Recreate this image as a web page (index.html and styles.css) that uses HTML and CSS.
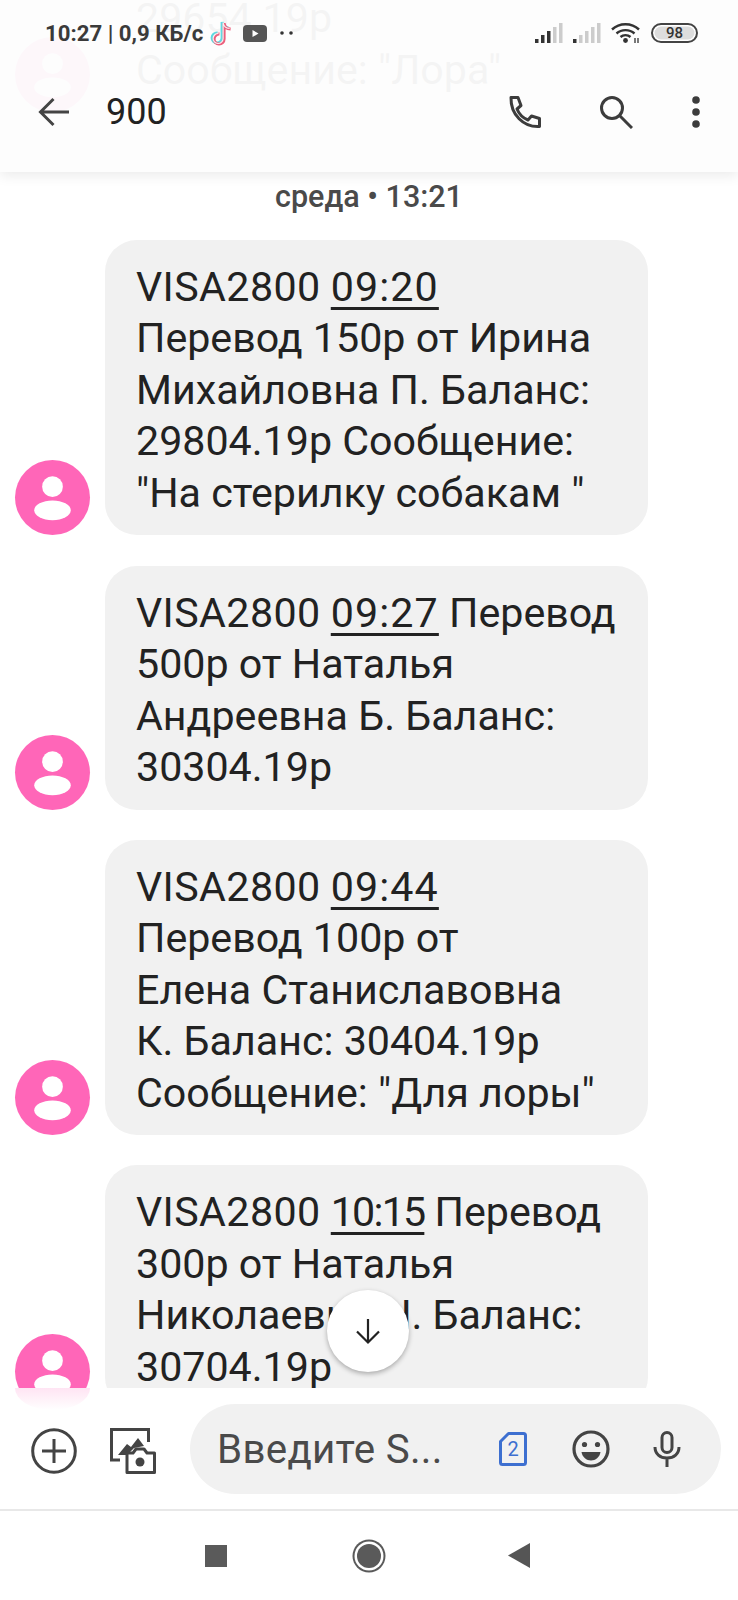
FILE: index.html
```html
<!DOCTYPE html>
<html lang="ru">
<head>
<meta charset="utf-8">
<title>900</title>
<link rel="stylesheet" href="styles.css">
</head>
<body>
<div class="phone">
  <main class="thread">
    <div class="list">
      <div class="msg ghost">
        <div class="avatar"><svg viewBox="0 0 76 76"><circle cx="38" cy="27" r="10.5"/><ellipse cx="38" cy="51" rx="18.5" ry="10"/></svg></div>
        <div class="bubble">29654.19р<br>Сообщение: "Лора"</div>
      </div>
      <div class="date">среда • 13:21</div>
      <div class="msg">
        <div class="avatar"><svg viewBox="0 0 76 76"><circle cx="38" cy="27" r="10.5"/><ellipse cx="38" cy="51" rx="18.5" ry="10"/></svg></div>
        <div class="bubble"><span class="card">VISA2800</span> <u class="wide">09:20</u><br>Перевод 150р от Ирина<br>Михайловна П. Баланс:<br>29804.19р Сообщение:<br>"На стерилку собакам "</div>
      </div>
      <div class="msg">
        <div class="avatar"><svg viewBox="0 0 76 76"><circle cx="38" cy="27" r="10.5"/><ellipse cx="38" cy="51" rx="18.5" ry="10"/></svg></div>
        <div class="bubble"><span class="card">VISA2800</span> <u class="wide">09:27</u> Перевод<br>500р от Наталья<br>Андреевна Б. Баланс:<br>30304.19р</div>
      </div>
      <div class="msg">
        <div class="avatar"><svg viewBox="0 0 76 76"><circle cx="38" cy="27" r="10.5"/><ellipse cx="38" cy="51" rx="18.5" ry="10"/></svg></div>
        <div class="bubble"><span class="card">VISA2800</span> <u class="wide">09:44</u><br>Перевод 100р от<br>Елена Станиславовна<br>К. Баланс: 30404.19р<br>Сообщение: "Для лоры"</div>
      </div>
      <div class="msg">
        <div class="avatar"><svg viewBox="0 0 76 76"><circle cx="38" cy="27" r="10.5"/><ellipse cx="38" cy="51" rx="18.5" ry="10"/></svg></div>
        <div class="bubble"><span class="card">VISA2800</span> <u class="narrow">10:15</u> Перевод<br>300р от Наталья<br>Николаевна Н. Баланс:<br>30704.19р</div>
      </div>
    </div>
    <div class="fade"></div>
    <button class="fab"><svg viewBox="0 0 30 30" width="30" height="30"><path d="M15 3v23.500M4 15.500l11 11 11-11" fill="none" stroke="#222" stroke-width="2.200"/></svg></button>
  </main>

  <header class="top">
    <div class="status">
      <div class="status-left">
        <span class="clock">10:27 | 0,9 КБ/с</span>
        <svg class="tiktok" viewBox="0 0 22 26" width="22" height="26">
          <g fill="none" stroke-width="3">
            <path d="M8.500 13.500a5 5 0 1 0 4.600 5V2.500c.5 3.500 3 5.800 6.500 6" stroke="#5fd9e0" transform="translate(-1 -.6)"/>
            <path d="M8.500 13.500a5 5 0 1 0 4.600 5V2.500c.5 3.500 3 5.800 6.500 6" stroke="#ec5f7c" transform="translate(1 .6)"/>
            <path d="M8.500 13.500a5 5 0 1 0 4.600 5V2.500c.5 3.500 3 5.800 6.500 6" stroke="#f4f4f4" stroke-width="1.200"/>
          </g>
        </svg>
        <svg class="yt" viewBox="0 0 24 17" width="24" height="17"><rect width="24" height="17" rx="4" fill="#555"/><path d="M9.500 5l6 3.500-6 3.500z" fill="#fff"/></svg>
        <svg class="more" viewBox="0 0 14 4" width="14" height="4"><circle cx="2" cy="2" r="1.800" fill="#333"/><circle cx="11" cy="2" r="1.800" fill="#333"/></svg>
      </div>
      <div class="status-right">
        <svg viewBox="0 0 28 20" width="28" height="20" class="sig"><rect x="0" y="16" width="3.500" height="4" fill="#333"/><rect x="6" y="12" width="3.500" height="8" fill="#333"/><rect x="12" y="8" width="3.500" height="12" fill="#333"/><rect x="18" y="4" width="3.500" height="16" fill="#ccc"/><rect x="24" y="0" width="3.500" height="20" fill="#ccc"/></svg>
        <svg viewBox="0 0 28 20" width="28" height="20" class="sig"><rect x="0" y="16" width="3.500" height="4" fill="#333"/><rect x="6" y="12" width="3.500" height="8" fill="#ccc"/><rect x="12" y="8" width="3.500" height="12" fill="#ccc"/><rect x="18" y="4" width="3.500" height="16" fill="#ccc"/><rect x="24" y="0" width="3.500" height="20" fill="#ccc"/></svg>
        <svg viewBox="0 0 29 22" width="29" height="22" class="wifi"><g fill="none" stroke="#333" stroke-width="2.400"><path d="M1 7.500c7.500-7 19.500-7 27 0"/><path d="M5.500 11.500c5-4.500 13-4.500 18 0"/><path d="M9.500 15c2.800-2.500 7.200-2.500 10 0"/></g><circle cx="14.500" cy="18.500" r="2.400" fill="#333"/><path d="M24 21v-5M27 16v5" stroke="#333" stroke-width="1.300"/></svg>
        <div class="battery"><span>98</span></div>
      </div>
    </div>
    <div class="bar">
      <svg class="back" viewBox="0 0 32 30" width="32" height="30"><path d="M31 15H3M15.500 2L2.500 15l13 13" fill="none" stroke="#444" stroke-width="3"/></svg>
      <div class="title">900</div>
      <svg class="ic-phone" viewBox="0 0 36 36" width="36" height="36"><path d="M3 3.500h7l3 8-4 3.500c2 5 6 9 11 11l3.500-4 8 2.500v8c-16 1-29-12-28.500-29z" fill="none" stroke="#3c3c3c" stroke-width="3" stroke-linejoin="round" transform="translate(0 -1)"/></svg>
      <svg class="ic-search" viewBox="0 0 34 34" width="34" height="34"><circle cx="13" cy="13" r="10.500" fill="none" stroke="#3c3c3c" stroke-width="3"/><path d="M21 21l12 12" stroke="#3c3c3c" stroke-width="3"/></svg>
      <svg class="ic-more" viewBox="0 0 8 32" width="8" height="32"><circle cx="4" cy="4" r="3.800" fill="#3c3c3c"/><circle cx="4" cy="16" r="3.800" fill="#3c3c3c"/><circle cx="4" cy="28" r="3.800" fill="#3c3c3c"/></svg>
    </div>
  </header>

  <section class="composer">
    <svg class="ic-plus" viewBox="0 0 46 46" width="46" height="46"><circle cx="23" cy="23" r="21.300" fill="none" stroke="#444" stroke-width="3"/><path d="M23 11v24M11 23h24" stroke="#444" stroke-width="3"/></svg>
    <svg class="ic-gallery" viewBox="0 0 46 46" width="46" height="46"><path d="M10 32H1.500V1.500h37V14" fill="none" stroke="#444" stroke-width="3"/><path d="M8 27l9-11 4 3 7-9 6 8-10 2-6 6v1z" fill="#444"/><path d="M17 44.500V25h6l3-4h8l3 4h7.500v19.500z" fill="#fff" stroke="#444" stroke-width="3" stroke-linejoin="round"/><circle cx="30" cy="34" r="4.500" fill="#444"/></svg>
    <div class="input">
      <span class="placeholder">Введите S...</span>
      <svg class="ic-sim" viewBox="0 0 28 34" width="28" height="34"><path d="M9.500 1.500h15a2 2 0 0 1 2 2v27a2 2 0 0 1-2 2h-21a2 2 0 0 1-2-2V9.500z" fill="none" stroke="#3d6fd0" stroke-width="3" stroke-linejoin="round"/><text x="14" y="24" text-anchor="middle" class="sim-text">2</text></svg>
      <svg class="ic-emoji" viewBox="0 0 38 38" width="38" height="38"><circle cx="19" cy="19" r="17" fill="none" stroke="#444" stroke-width="3.200"/><circle cx="12.500" cy="14.500" r="2.600" fill="#444"/><circle cx="25.500" cy="14.500" r="2.600" fill="#444"/><path d="M9.500 22h19c-1 5.500-5 8.500-9.500 8.500S10.500 27.500 9.500 22z" fill="#444"/></svg>
      <svg class="ic-mic" viewBox="0 0 28 36" width="28" height="36"><rect x="9" y="1.500" width="10" height="20" rx="5" fill="none" stroke="#444" stroke-width="3"/><path d="M2 16c0 7 5 11 12 11s12-4 12-11M14 27v9" fill="none" stroke="#444" stroke-width="3"/></svg>
    </div>
  </section>

  <nav class="nav">
    <div class="nav-square"></div>
    <div class="nav-circle"></div>
    <svg class="nav-back" viewBox="0 0 22 25" width="22" height="25"><path d="M22 0v25L0 12.500z" fill="#555"/></svg>
  </nav>
</div>
</body>
</html>
```

FILE: styles.css
```css
* { box-sizing: border-box; }
html, body { margin: 0; padding: 0; background: #fff; }
body { font-family: Roboto, "Noto Sans", sans-serif; color: #222; }
svg { display: block; flex: none; }

.phone {
  position: relative;
  width: 738px;
  height: 1600px;
  overflow: hidden;
  display: flex;
  flex-direction: column;
}

/* conversation */
.thread {
  position: relative;
  height: 1388px;
  flex: none;
}
.list {
  height: 1388px;
  overflow: hidden;
  display: flex;
  flex-direction: column;
  gap: 30.200px;
}
.msg {
  display: flex;
  align-items: flex-end;
  gap: 15px;
  padding-left: 15px;
  flex: none;
}
.avatar {
  width: 75px;
  height: 75px;
  border-radius: 50%;
  background: #ff66b8;
  flex: none;
}
.avatar svg { width: 75px; height: 75px; fill: #fff; }
.bubble {
  width: 543px;
  background: #f1f1f1;
  border-radius: 32px;
  padding: 22px 10px 16px 31px;
  font-size: 41.200px;
  line-height: 51.500px;
  color: #222;
  white-space: nowrap;
}
.bubble u { text-underline-offset: 6px; text-decoration-thickness: 2.500px; }
.card { letter-spacing: .4px; }
.wide { letter-spacing: 1.100px; }
.narrow { letter-spacing: -1.800px; }
.ghost { margin-top: -29px; }
.date {
  flex: none;
  margin: 36.500px 0 -5px;
  text-align: center;
  font-size: 30.500px;
  font-weight: 500;
  line-height: 36px;
  color: #4a4a4a;
}
.fade {
  position: absolute;
  left: 15px;
  top: 1388px;
  width: 75px;
  height: 22px;
  border-radius: 0 0 38px 38px / 0 0 22px 22px;
  background: linear-gradient(#ffe4f3, #fff);
}
.fab {
  position: absolute;
  left: 327px;
  top: 1290px;
  width: 82px;
  height: 82px;
  border: 0;
  border-radius: 50%;
  background: #fff;
  box-shadow: 0 2px 5px rgba(0,0,0,.3);
  display: flex;
  align-items: center;
  justify-content: center;
  padding: 0;
}

/* top overlay */
.top {
  position: absolute;
  left: 0;
  top: 0;
  width: 738px;
  height: 172px;
  background: rgba(253,253,253,.96);
  box-shadow: 0 4px 12px rgba(0,0,0,.08);
}
.status {
  height: 66px;
  display: flex;
  align-items: center;
  justify-content: space-between;
  padding: 0 40px 0 45px;
}
.status-left, .status-right { display: flex; align-items: center; }
.clock { font-size: 22.200px; font-weight: 700; color: #3a3a3a; white-space: nowrap; }
.tiktok { margin-left: 7px; }
.yt { margin-left: 11px; }
.more { margin-left: 13px; }
.sig { margin-right: 10px; }
.wifi { margin-right: 11px; }
.battery {
  width: 47px;
  height: 20px;
  border: 2px solid #444;
  border-radius: 10px;
  display: flex;
  align-items: center;
  justify-content: center;
  background: #ddd;
  box-shadow: inset 0 0 0 1.500px #fff;
}
.battery span { font-size: 15px; font-weight: 500; color: #333; line-height: 16px; }
.bar {
  height: 92px;
  display: flex;
  align-items: center;
  padding: 0 38px;
}
.title { font-size: 36px; color: #222; margin-left: 36px; flex: 1; }
.ic-phone { margin-top: 2px; }
.ic-search { margin-left: 55px; }
.ic-more { margin-left: 59px; }

/* composer */
.composer {
  height: 123px;
  flex: none;
  border-bottom: 2px solid #e8e8e8;
  display: flex;
  align-items: center;
  padding: 16px 17px 15px 31px;
}
.ic-plus { margin-top: 3px; }
.ic-gallery { margin-left: 33px; margin-top: 3px; }
.input {
  margin-left: 34px;
  flex: 1;
  height: 90px;
  background: #f1f1f1;
  border-radius: 45px;
  display: flex;
  align-items: center;
  padding-left: 27px;
}
.placeholder { font-size: 40.300px; color: #4a4a4a; width: 282px; white-space: nowrap; letter-spacing: .3px; }
.sim-text { font-family: Roboto, sans-serif; font-size: 20px; fill: #3d6fd0; }
.ic-emoji { margin-left: 45px; }
.ic-mic { margin-left: 43px; }

/* nav */
.nav {
  flex: 1;
  display: flex;
  align-items: center;
  padding-left: 205px;
}
.nav-square { width: 22px; height: 22px; background: #5a5a5a; }
.nav-circle {
  width: 24px;
  height: 24px;
  margin-left: 130px;
  border-radius: 50%;
  background: #5a5a5a;
  box-shadow: 0 0 0 2.500px #fff, 0 0 0 4.500px #5a5a5a;
}
.nav-back { margin-left: 127px; }
```
